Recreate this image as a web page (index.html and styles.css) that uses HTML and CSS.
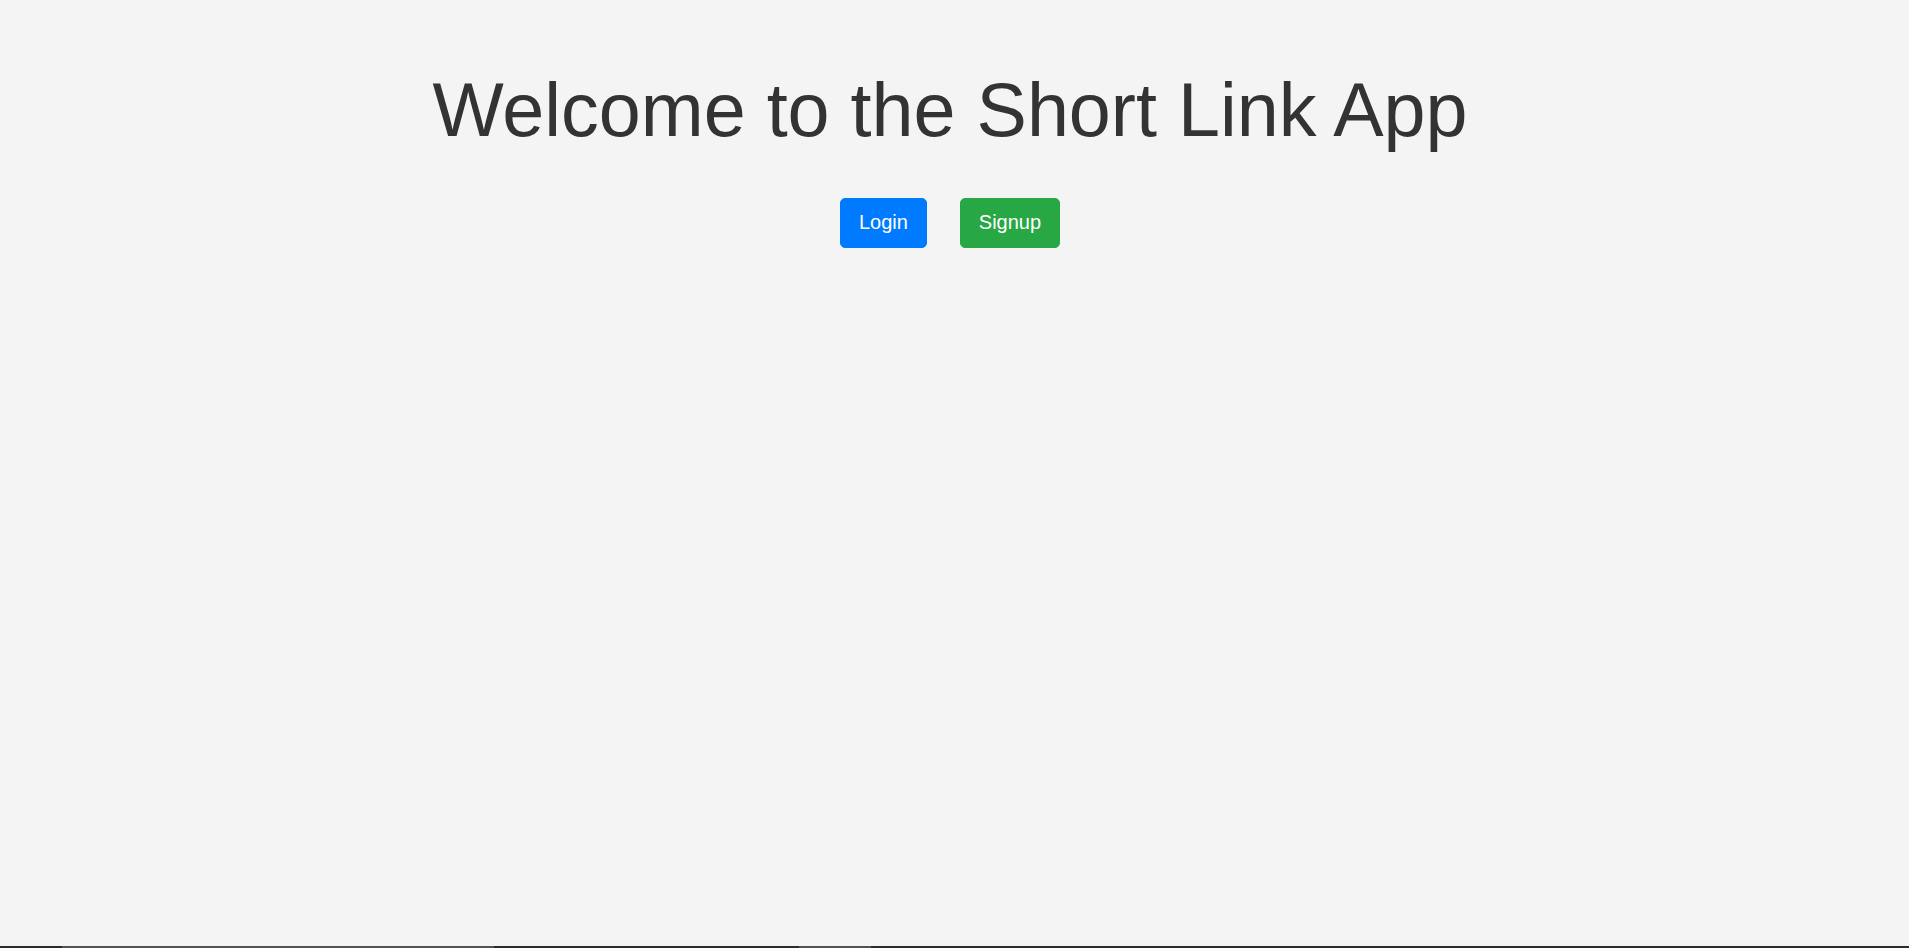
FILE: index.html
```html
<!DOCTYPE html>
<html lang="en">
<head>
<meta charset="utf-8">
<title>Short Link App</title>
<link rel="stylesheet" href="styles.css">
</head>
<body>
<div class="page">
  <main class="hero">
    <h1 class="title">Welcome to the Short Link App</h1>
    <div class="actions">
      <a class="btn btn-primary" href="#">Login</a>
      <a class="btn btn-success" href="#">Signup</a>
    </div>
  </main>
  <div class="edge">
    <span class="seg dark s1"></span>
    <span class="seg gray s2"></span>
    <span class="seg dark s3"></span>
    <span class="seg gray s4"></span>
    <span class="seg dark s5"></span>
  </div>
</div>
</body>
</html>
```

FILE: styles.css
```css
html, body {
  margin: 0;
  padding: 0;
  height: 100%;
}
body {
  background: #f4f4f4;
  color: #333333;
  font-family: "Liberation Sans", Arial, sans-serif;
}
.page {
  min-height: 100vh;
  display: flex;
  flex-direction: column;
}
.hero {
  flex: 1;
  display: flex;
  flex-direction: column;
  align-items: center;
  padding-top: 65px;
  padding-right: 9px;
}
.title {
  margin: 0 0 42px;
  font-size: 75.5px;
  font-weight: 400;
  line-height: 1.2;
  color: #333333;
  white-space: nowrap;
}
.actions {
  display: flex;
  justify-content: center;
  gap: 33px;
}
.btn {
  display: inline-block;
  font-size: 20px;
  line-height: 31px;
  padding: 8.5px 18px;
  border: 1px solid transparent;
  border-radius: 5px;
  color: #ffffff;
  text-decoration: none;
}
.btn-primary {
  background: #007bff;
  border-color: #007bff;
}
.btn-success {
  background: #28a745;
  border-color: #28a745;
}
.edge {
  display: flex;
  height: 2px;
}
.seg { display: block; height: 2px; }
.dark { background: #2b2b2b; }
.gray { background: #525252; }
.s1 { width: 62px; }
.s2 { width: 432px; }
.s3 { width: 305px; }
.s4 { width: 72px; }
.s5 { flex: 1; }
```
